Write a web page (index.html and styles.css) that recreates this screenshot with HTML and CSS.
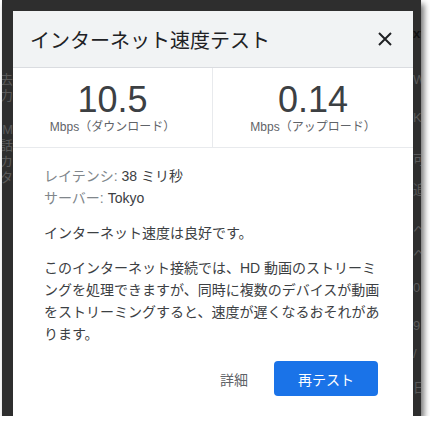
FILE: index.html
```html
<!DOCTYPE html>
<html lang="ja">
<head>
  <meta charset="UTF-8" />
  <meta name="viewport" content="width=device-width, initial-scale=1.0"/>
  <title>インターネット速度テスト</title>
  <link rel="stylesheet" href="styles.css">
</head>
<body>
  <div class="frame">
    <div class="strip left">
      <span style="margin-top:72px">去</span>
      <span>力</span>
      <span style="margin-top:18px">M</span>
      <span>話</span>
      <span>カ</span>
      <span>タ</span>
    </div>

    <div class="dialog">
      <div class="header">
        <h1>インターネット速度テスト</h1>
        <svg class="close" width="14" height="14" viewBox="0 0 14 14">
          <path d="M1 1 L13 13 M13 1 L1 13" stroke="#202124" stroke-width="2" />
        </svg>
      </div>

      <div class="stats">
        <div class="stat">
          <div class="num">10.5</div>
          <div class="unit">Mbps（ダウンロード）</div>
        </div>
        <div class="stat">
          <div class="num">0.14</div>
          <div class="unit">Mbps（アップロード）</div>
        </div>
      </div>

      <div class="content">
        <p class="info">
          <span class="lbl">レイテンシ:</span> 38 ミリ秒<br>
          <span class="lbl">サーバー:</span> Tokyo
        </p>
        <p>インターネット速度は良好です。</p>
        <p>このインターネット接続では、HD 動画のストリーミ<br>ングを処理できますが、同時に複数のデバイスが動画<br>をストリーミングすると、速度が遅くなるおそれがあ<br>ります。</p>

        <div class="actions">
          <button class="btn-text">詳細</button>
          <button class="btn-main">再テスト</button>
        </div>
      </div>
    </div>

    <div class="strip right">
      <span class="dark" style="margin-top:26px">xt</span>
      <span style="margin-top:30px">W</span>
      <span style="margin-top:22px">K</span>
      <span style="margin-top:26px">可</span>
      <span style="margin-top:14px">追</span>
      <span style="margin-top:24px">ヘ</span>
      <span style="margin-top:8px">ヘ</span>
      <span style="margin-top:18px">0</span>
      <span style="margin-top:22px">9</span>
      <span style="margin-top:12px">/</span>
      <span style="margin-top:18px">日</span>
    </div>
  </div>
</body>
</html>
```

FILE: styles.css
```css
body {
  margin: 0;
  background: #fff;
  font-family: 'Liberation Sans', 'Noto Sans CJK JP', sans-serif;
}

.frame {
  display: flex;
  width: 419px;
  height: 416px;
  margin-left: 2px;
  background: #2e2e2e;
  box-shadow: 3px 4px 6px rgba(0, 0, 0, 0.55);
}

.strip {
  display: flex;
  flex-direction: column;
  overflow: hidden;
  font-size: 13px;
  line-height: 16px;
  color: #5a5a5a;
}

.strip.left {
  width: 11px;
  align-items: flex-end;
}

.strip.right {
  width: 8px;
}

.strip .dark {
  color: #111;
  font-weight: bold;
}

.dialog {
  width: 400px;
  margin-top: 11px;
  background: #fff;
  display: flex;
  flex-direction: column;
}

.header {
  height: 56px;
  background: #f1f3f4;
  border-bottom: 1px solid #dadce0;
  display: flex;
  align-items: center;
  justify-content: space-between;
  padding: 0 21px 0 17px;
}

h1 {
  margin: 0;
  font-size: 20px;
  font-weight: normal;
  color: #202124;
}

.stats {
  display: grid;
  grid-template-columns: 1fr 1fr;
  height: 79px;
  border-bottom: 1px solid #e8eaed;
}

.stat {
  text-align: center;
  padding-top: 12px;
}

.stat:first-child {
  border-right: 1px solid #e8eaed;
}

.num {
  font-size: 36px;
  line-height: 40px;
  color: #3c4043;
}

.unit {
  font-size: 12px;
  line-height: 14px;
  color: #5f6368;
}

.content {
  padding: 17px 31px 0;
  font-size: 14px;
  line-height: 22px;
  color: #3c4043;
}

.content p {
  margin: 0 0 13px;
  white-space: nowrap;
}

.lbl {
  color: #80868b;
}

.actions {
  display: flex;
  justify-content: flex-end;
  align-items: center;
  gap: 26px;
  margin-top: 16px;
  padding-right: 4px;
}

button {
  font-family: inherit;
  font-size: 14px;
  border: none;
  cursor: pointer;
}

.btn-text {
  background: none;
  color: #5f6368;
  padding: 0;
}

.btn-main {
  width: 104px;
  height: 35px;
  background: #1a73e8;
  color: #fff;
  border-radius: 4px;
}
```
